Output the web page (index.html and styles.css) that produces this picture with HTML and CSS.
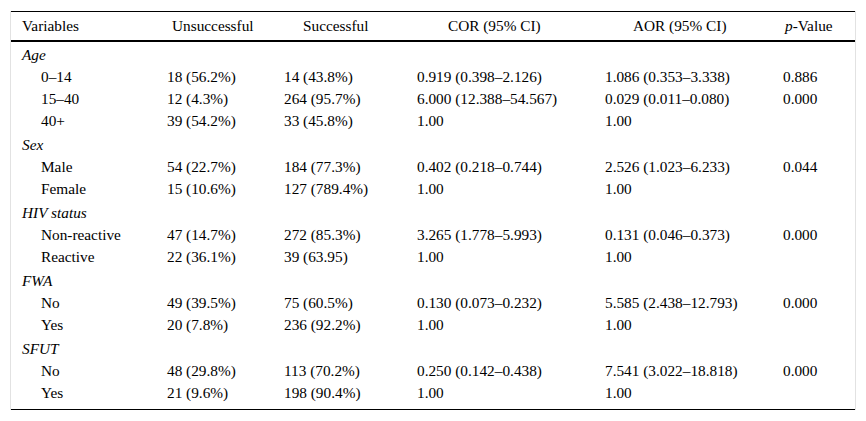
FILE: index.html
```html
<!DOCTYPE html>
<html lang="en">
<head>
<meta charset="utf-8">
<title>Table</title>
<link rel="stylesheet" href="styles.css">
</head>
<body>
<div class="wrap">
<table class="tbl">
<colgroup>
<col class="c1"><col class="c2"><col class="c3"><col class="c4"><col class="c5"><col class="c6">
</colgroup>
<thead>
<tr>
<th class="h1">Variables</th>
<th class="h2">Unsuccessful</th>
<th class="h3">Successful</th>
<th class="h4">COR (95% CI)</th>
<th class="h5">AOR (95% CI)</th>
<th class="h6"><i>p</i>-Value</th>
</tr>
</thead>
<tbody>
<tr class="cat"><td colspan="6"><i>Age</i></td></tr>
<tr><td>0–14</td><td>18 (56.2%)</td><td>14 (43.8%)</td><td>0.919 (0.398–2.126)</td><td>1.086 (0.353–3.338)</td><td>0.886</td></tr>
<tr><td>15–40</td><td>12 (4.3%)</td><td>264 (95.7%)</td><td>6.000 (12.388–54.567)</td><td>0.029 (0.011–0.080)</td><td>0.000</td></tr>
<tr><td>40+</td><td>39 (54.2%)</td><td>33 (45.8%)</td><td>1.00</td><td>1.00</td><td></td></tr>
<tr class="cat"><td colspan="6"><i>Sex</i></td></tr>
<tr><td>Male</td><td>54 (22.7%)</td><td>184 (77.3%)</td><td>0.402 (0.218–0.744)</td><td>2.526 (1.023–6.233)</td><td>0.044</td></tr>
<tr><td>Female</td><td>15 (10.6%)</td><td>127 (789.4%)</td><td>1.00</td><td>1.00</td><td></td></tr>
<tr class="cat"><td colspan="6"><i>HIV status</i></td></tr>
<tr><td>Non-reactive</td><td>47 (14.7%)</td><td>272 (85.3%)</td><td>3.265 (1.778–5.993)</td><td>0.131 (0.046–0.373)</td><td>0.000</td></tr>
<tr><td>Reactive</td><td>22 (36.1%)</td><td>39 (63.95)</td><td>1.00</td><td>1.00</td><td></td></tr>
<tr class="cat"><td colspan="6"><i>FWA</i></td></tr>
<tr><td>No</td><td>49 (39.5%)</td><td>75 (60.5%)</td><td>0.130 (0.073–0.232)</td><td>5.585 (2.438–12.793)</td><td>0.000</td></tr>
<tr><td>Yes</td><td>20 (7.8%)</td><td>236 (92.2%)</td><td>1.00</td><td>1.00</td><td></td></tr>
<tr class="cat"><td colspan="6"><i>SFUT</i></td></tr>
<tr><td>No</td><td>48 (29.8%)</td><td>113 (70.2%)</td><td>0.250 (0.142–0.438)</td><td>7.541 (3.022–18.818)</td><td>0.000</td></tr>
<tr class="last"><td>Yes</td><td>21 (9.6%)</td><td>198 (90.4%)</td><td>1.00</td><td>1.00</td><td></td></tr>
</tbody>
</table>
</div>
</body>
</html>
```
FILE: styles.css
```css
html, body {
  margin: 0;
  padding: 0;
  background: #fff;
}

body {
  font-family: "Liberation Serif", "Times New Roman", serif;
  font-size: 15.3px;
  color: #000;
}

.wrap {
  margin: 11px 10px 0 10px;
  border-left: 1px solid #e2e2e2;
  border-right: 1px solid #e2e2e2;
}

.tbl {
  width: 100%;
  border-collapse: collapse;
  table-layout: fixed;
  border-top: 1px solid #000;
  border-bottom: 1px solid #000;
}

.c1 { width: 156px; }
.c2 { width: 117px; }
.c3 { width: 133px; }
.c4 { width: 188px; }
.c5 { width: 178px; }
.c6 { width: 72px; }

.tbl th {
  font-weight: normal;
  text-align: left;
  white-space: nowrap;
  height: 28px;
  padding: 0;
  line-height: 28px;
  box-sizing: border-box;
  border-bottom: 2px solid #000;
}

.tbl th.h1 { padding-left: 11px; }
.tbl th.h2 { padding-left: 5px; }
.tbl th.h3 { padding-left: 19px; }
.tbl th.h4 { padding-left: 31px; }
.tbl th.h5 { padding-left: 28px; }
.tbl th.h6 { padding-left: 2px; }

.tbl td {
  padding: 0;
  line-height: 22px;
  white-space: nowrap;
  vertical-align: top;
}

.tbl td:first-child {
  padding-left: 30px;
}

.tbl tr.cat td {
  padding-left: 11px;
  padding-top: 2px;
}

.tbl tr.last td {
  padding-bottom: 5px;
}
```
